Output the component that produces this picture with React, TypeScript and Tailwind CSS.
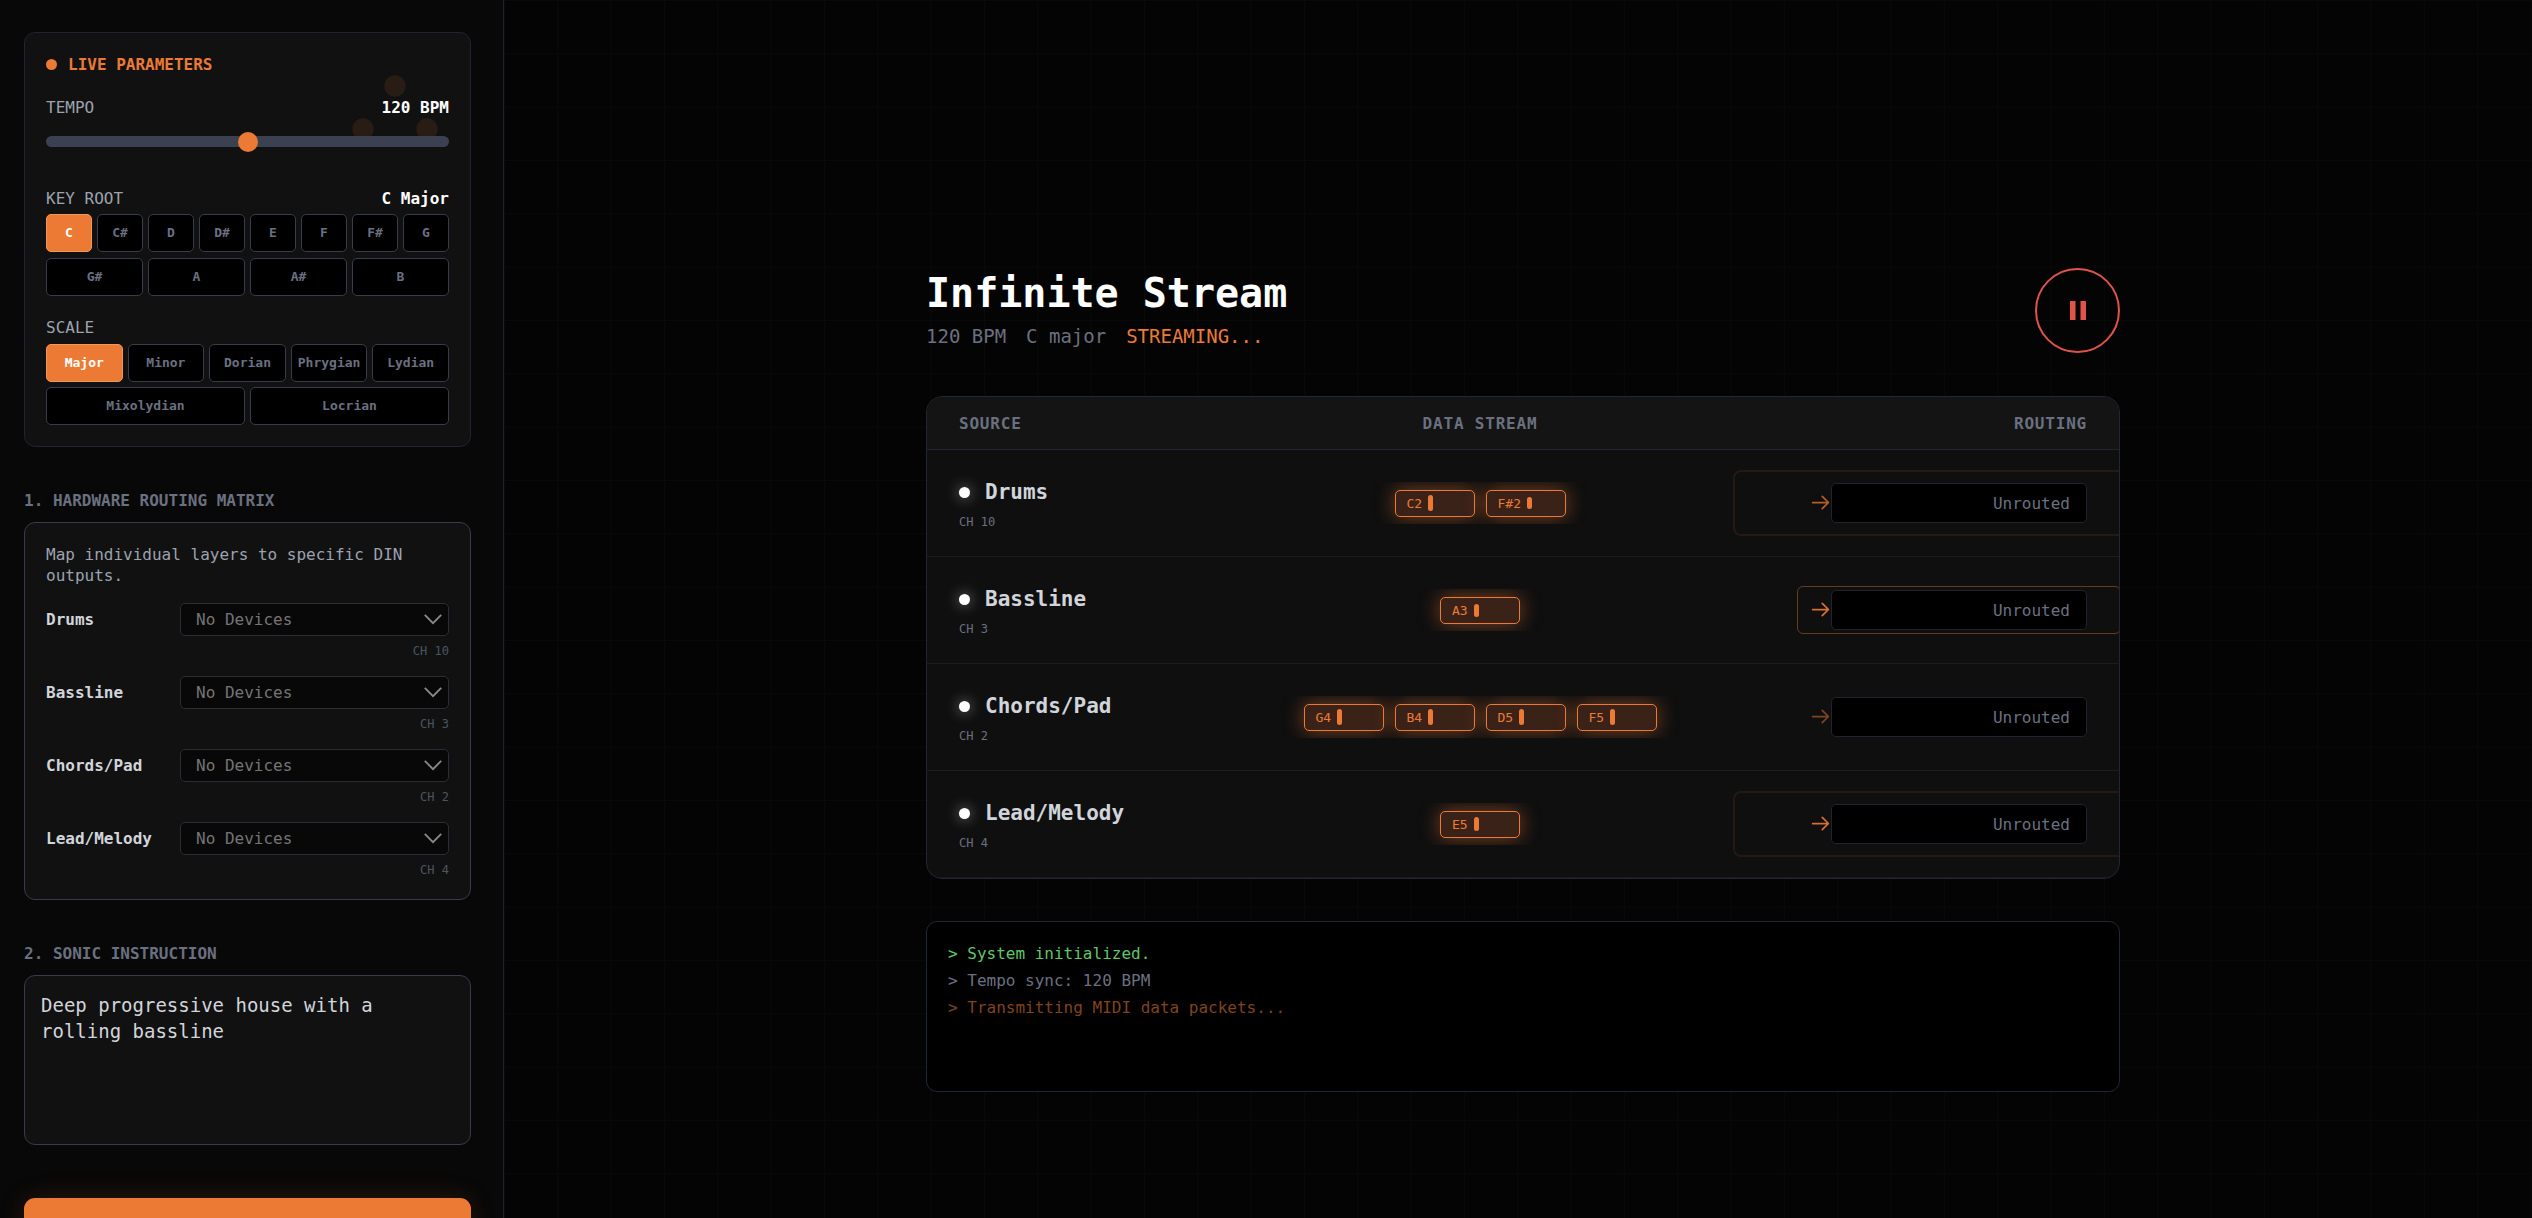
import { useState } from "react";

interface Note {
  name: string;
  bar: string;
}

interface Layer {
  id: string;
  name: string;
  channel: number;
  notes: Note[];
  arrow: string;
  ring?: string;
}

const KEYS = ["C", "C#", "D", "D#", "E", "F", "F#", "G", "G#", "A", "A#", "B"];

const SCALES = ["Major", "Minor", "Dorian", "Phrygian", "Lydian", "Mixolydian", "Locrian"];

const RING_WIDE = "-inset-x-[98px] -inset-y-[13px] rounded-lg border-2 border-[#ec7a35]/10";
const RING_TIGHT = "-inset-x-[34px] -inset-y-1 rounded-md border border-[#ec7a35]/40";

const LAYERS: Layer[] = [
  {
    id: "drums",
    name: "Drums",
    channel: 10,
    notes: [
      { name: "C2", bar: "h-4" },
      { name: "F#2", bar: "h-3" },
    ],
    arrow: "opacity-75",
    ring: RING_WIDE,
  },
  {
    id: "bass",
    name: "Bassline",
    channel: 3,
    notes: [{ name: "A3", bar: "h-[13px]" }],
    arrow: "opacity-90",
    ring: RING_TIGHT,
  },
  {
    id: "chords",
    name: "Chords/Pad",
    channel: 2,
    notes: [
      { name: "G4", bar: "h-4" },
      { name: "B4", bar: "h-4" },
      { name: "D5", bar: "h-4" },
      { name: "F5", bar: "h-4" },
    ],
    arrow: "opacity-50",
  },
  {
    id: "lead",
    name: "Lead/Melody",
    channel: 4,
    notes: [{ name: "E5", bar: "h-3.5" }],
    arrow: "opacity-90",
    ring: RING_WIDE,
  },
];

function OptionButton({
  label,
  active,
  size,
  onClick,
}: {
  label: string;
  active: boolean;
  size: string;
  onClick: () => void;
}) {
  return (
    <button
      onClick={onClick}
      className={`h-[38px] flex-1 rounded-[5px] border pb-0.5 text-[13px] font-bold ${size} ${
        active
          ? "border-[#f09a58] bg-[#ec7a35] text-white"
          : "border-[#363c4b] bg-black text-[#6b7080]"
      }`}
    >
      {label}
    </button>
  );
}

function LiveParameters() {
  const [tempo, setTempo] = useState(120);
  const [root, setRoot] = useState("C");
  const [scale, setScale] = useState("Major");

  return (
    <section className="relative rounded-[11px] border border-[#1f242e] bg-[#111111] p-[21px]">
      {/* Watermark */}
      <svg
        className="absolute right-8 top-[42px] h-[65px] w-[86px] fill-[#ec7a35] opacity-10"
        viewBox="0 0 86 65"
        aria-hidden="true"
      >
        <circle cx="43" cy="11" r="10.7" />
        <circle cx="11" cy="54" r="10.7" />
        <circle cx="75" cy="54" r="10.7" />
      </svg>

      <div className="relative">
        <h2 className="flex items-center gap-[11px] font-bold text-[#ec7a35]">
          <span className="size-[11px] rounded-full bg-[#ec7a35]" />
          LIVE PARAMETERS
        </h2>

        <div className="mt-[22px] flex justify-between">
          <label htmlFor="tempo" className="text-[#9ca3af]">TEMPO</label>
          <span className="font-bold text-white">{tempo} BPM</span>
        </div>
        <input
          id="tempo"
          type="range"
          min={60}
          max={180}
          value={tempo}
          onChange={(e) => setTempo(Number(e.target.value))}
          className="mt-[18px] block h-[11px] w-full appearance-none rounded-full bg-[#3b4150] [&::-webkit-slider-thumb]:size-5 [&::-webkit-slider-thumb]:appearance-none [&::-webkit-slider-thumb]:rounded-full [&::-webkit-slider-thumb]:bg-[#ec7a35]"
        />

        <div className="mt-[41px] flex justify-between">
          <span className="text-[#9ca3af]">KEY ROOT</span>
          <span className="font-bold text-white">{root} {scale}</span>
        </div>
        <div className="mt-[5px] flex flex-wrap gap-x-[5px] gap-y-1.5">
          {KEYS.map((k) => (
            <OptionButton
              key={k}
              label={k}
              size="min-w-[42px]"
              active={k === root}
              onClick={() => setRoot(k)}
            />
          ))}
        </div>

        <div className="mt-[21px] text-[#9ca3af]">SCALE</div>
        <div className="mt-1.5 flex flex-wrap gap-[5px]">
          {SCALES.map((s) => (
            <OptionButton
              key={s}
              label={s}
              size="min-w-[72px]"
              active={s === scale}
              onClick={() => setScale(s)}
            />
          ))}
        </div>
      </div>
    </section>
  );
}

function RoutingMatrix() {
  return (
    <section className="mt-[43px]">
      <h2 className="mb-[11px] font-bold text-[#6b7080]">1. HARDWARE ROUTING MATRIX</h2>
      <div className="rounded-[11px] border border-[#363c4b] bg-[#111111] p-[21px]">
        <p className="mb-[17px] text-[#9ca3af]">
          Map individual layers to specific DIN outputs.
        </p>
        <div className="flex flex-col gap-[17px]">
          {LAYERS.map((layer) => (
            <div key={layer.id}>
              <div className="flex items-center">
                <label htmlFor={`out-${layer.id}`} className="w-[134px] font-bold text-[#d1d5db]">
                  {layer.name}
                </label>
                <div className="relative flex-1">
                  <select
                    id={`out-${layer.id}`}
                    disabled
                    className="block h-[33px] w-full appearance-none rounded-[5px] border border-[#2a2d38] bg-[#080808] px-[15px] text-[#757575] opacity-100"
                  >
                    <option>No Devices</option>
                  </select>
                  <svg
                    className="pointer-events-none absolute right-[7px] top-[11px] h-[11px] w-[18px] fill-none stroke-[#8a8a8a]"
                    viewBox="0 0 18 11"
                    strokeWidth="1.8"
                    aria-hidden="true"
                  >
                    <path d="M0.8 0.8 9 9.2 17.2 0.8" />
                  </svg>
                </div>
              </div>
              <div className="mt-[7px] text-right text-xs text-[#4b5563]">CH {layer.channel}</div>
            </div>
          ))}
        </div>
      </div>
    </section>
  );
}

function Sidebar() {
  const [prompt, setPrompt] = useState("Deep progressive house with a rolling bassline");

  return (
    <aside className="w-[504px] shrink-0 overflow-y-auto border-r border-[#1f232b] bg-[#080808] py-8 pl-6 pr-8 [scrollbar-width:none]">
      <LiveParameters />
      <RoutingMatrix />
      <section className="mt-[43px]">
        <label htmlFor="prompt" className="mb-[11px] block font-bold text-[#6b7080]">
          2. SONIC INSTRUCTION
        </label>
        <textarea
          id="prompt"
          value={prompt}
          onChange={(e) => setPrompt(e.target.value)}
          className="block h-[170px] w-full resize-none rounded-[11px] border border-[#363c4b] bg-[#111111] p-4 text-[19px] leading-[26px] text-[#d1d5db] outline-none"
        />
      </section>
      <button
        aria-label="Generate"
        className="mt-[53px] block h-16 w-full rounded-[11px] bg-[#ec7a35] shadow-[0_0_27px_rgba(236,122,53,0.15)]"
      />
    </aside>
  );
}

function LayerRow({ layer }: { layer: Layer }) {
  return (
    <tr className="[&>td]:h-[107px] [&>td]:border-b [&>td]:border-[#1a1c22] [&>td]:px-8">
      <td>
        <div className="flex items-center gap-[15px]">
          <span className="size-[11px] rounded-full bg-white shadow-[0_0_14px_rgba(255,255,255,0.5)]" />
          <span className="whitespace-nowrap text-[21px] font-bold leading-8 text-[#d1d5db]">
            {layer.name}
          </span>
        </div>
        <div className="mt-1.5 text-xs text-[#6b7080]">CH {layer.channel}</div>
      </td>
      <td>
        <div className="flex h-[42px] items-center justify-center gap-[11px] overflow-hidden">
          {layer.notes.map((note) => (
            <div
              key={note.name}
              className="flex h-[27px] w-20 items-center gap-1.5 rounded-[5px] border border-[#ec7a35] bg-[#3b2218] px-[11px] text-[13px] text-[#ec7a35] shadow-[0_0_20px_rgba(236,122,53,0.5)]"
            >
              {note.name}
              <span className={`w-[5px] rounded-full bg-[#ec7a35] ${note.bar}`} />
            </div>
          ))}
        </div>
      </td>
      <td>
        <div className="relative">
          <div className="flex h-10 items-center justify-end rounded-[5px] border border-[#1f242e] bg-black px-4 text-[#6b7080]">
            Unrouted
          </div>
          {layer.ring && <span className={`pointer-events-none absolute ${layer.ring}`} />}
          <svg
            className={`absolute right-full top-[9px] size-[21px] fill-none stroke-[#ec7a35] ${layer.arrow}`}
            viewBox="0 0 24 24"
            strokeWidth="2"
            strokeLinecap="round"
            strokeLinejoin="round"
            aria-hidden="true"
          >
            <path d="M14 5l7 7m0 0l-7 7m7-7H3" />
          </svg>
        </div>
      </td>
    </tr>
  );
}

export default function App() {
  const [playing, setPlaying] = useState(true);

  return (
    <div className="flex h-screen overflow-hidden bg-[#040404] font-['DejaVu_Sans_Mono',monospace] text-base leading-[21px] [&_.text-xs]:leading-4">
      <Sidebar />

      <main className="flex-1 overflow-hidden bg-[linear-gradient(to_right,#090909_1px,transparent_1px),linear-gradient(to_bottom,#090909_1px,transparent_1px)] bg-[size:53.33px_53.33px] pl-[10px] pt-[268px]">
        <div className="mx-auto max-w-[1194px]">
          <header className="flex items-start justify-between">
            <div>
              <h1 className="text-[40px] font-bold leading-[51px] text-white">Infinite Stream</h1>
              <div className="mt-1 flex gap-5 text-[19px] leading-[26px] text-[#6b7080]">
                <span>120 BPM</span>
                <span>C major</span>
                <span className="text-[#ec7a35]">STREAMING...</span>
              </div>
            </div>
            <button
              aria-label={playing ? "Pause" : "Play"}
              onClick={() => setPlaying(!playing)}
              className="flex size-[85px] items-center justify-center rounded-full border-2 border-[#e0534b]"
            >
              <svg className="h-[19px] w-4 fill-[#e0534b]" viewBox="0 0 16 19" aria-hidden="true">
                <rect width="5.5" height="19" />
                <rect x="10.5" width="5.5" height="19" />
              </svg>
            </button>
          </header>

          <div className="mt-[43px] overflow-hidden rounded-2xl border border-[#1f2733] bg-[#0f0f0f]">
            <table className="w-full table-fixed border-separate border-spacing-0">
              <colgroup>
                <col className="w-[234px]" />
                <col />
                <col className="w-80" />
              </colgroup>
              <thead>
                <tr className="bg-[#141414] tracking-wider text-[#6b7080] [&>th]:h-[53px] [&>th]:border-b [&>th]:border-[#1f2733] [&>th]:px-8">
                  <th className="text-left font-bold">SOURCE</th>
                  <th className="text-center font-bold">DATA STREAM</th>
                  <th className="text-right font-bold">ROUTING</th>
                </tr>
              </thead>
              <tbody>
                {LAYERS.map((layer) => (
                  <LayerRow key={layer.id} layer={layer} />
                ))}
              </tbody>
            </table>
          </div>

          <div className="mt-[42px] flex h-[171px] flex-col gap-1.5 rounded-[11px] border border-[#1f2733] bg-black p-[21px]">
            <p className="text-[#5fc768]">&gt; System initialized.</p>
            <p className="text-[#6b7080]">&gt; Tempo sync: 120 BPM</p>
            <p className="text-[#82431c]">&gt; Transmitting MIDI data packets...</p>
          </div>
        </div>
      </main>
    </div>
  );
}
